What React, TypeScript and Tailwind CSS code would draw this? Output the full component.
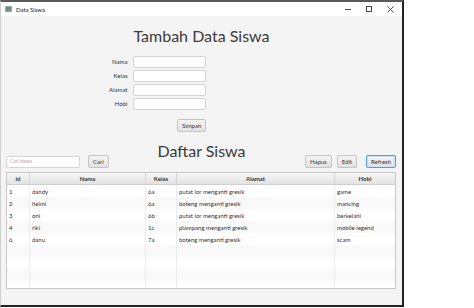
import React from 'react'

const rows = [
  { id: '1', nama: 'dandy', kelas: '6a', alamat: 'putat lor menganti gresik', hobi: 'game' },
  { id: '2', nama: 'helmi', kelas: '6a', alamat: 'boteng menganti gresik', hobi: 'mancing' },
  { id: '3', nama: 'oni', kelas: '6b', alamat: 'putat lor menganti gresik', hobi: 'berkelahi' },
  { id: '4', nama: 'riki', kelas: '1c', alamat: 'plampang menganti gresik', hobi: 'mobile legend' },
  { id: '6', nama: 'danu', kelas: '7a', alamat: 'boteng menganti gresik', hobi: 'scam' },
]

const font = { fontFamily: 'Lato, "Open Sans", sans-serif' }

function Field({ label }: { label: string }) {
  return (
    <>
      <div className="text-right text-[6px] text-[#333] leading-[12px]">{label}</div>
      <div className="h-[12px] w-[73px] bg-white border border-[#d4d4d4] rounded-[2px]" />
    </>
  )
}

function Btn({ children, focused }: { children: React.ReactNode; focused?: boolean }) {
  return (
    <div
      className={`h-[13px] px-[4px] flex items-center text-[6px] text-[#333] rounded-[2px] bg-gradient-to-b from-[#f4f4f4] to-[#e2e2e2] border ${
        focused ? 'border-[#4a9fd6] shadow-[inset_0_0_0_1px_#cde6f7]' : 'border-[#c4c4c4]'
      }`}
    >
      {children}
    </div>
  )
}

const cols = 'grid grid-cols-[23px_116px_31px_158px_1fr]'

export default function App() {
  return (
    <div className="w-[474px] h-[308px] bg-white" style={font}>
      <div className="w-[404px] h-[307px] flex flex-col border-t-2 border-r-2 border-b-2 border-l border-t-[#5a5a5a] border-r-[#222] border-b-[#222] border-l-[#cfcfcf]">
        {/* Title bar */}
        <div className="h-[14px] bg-white flex items-center pl-[4px]">
          <div className="w-[7px] h-[6px] bg-[#6d8f7a] border border-[#9ab] mr-[4px]" />
          <span className="text-[6px] text-[#222]">Data Siswa</span>
          <div className="ml-auto flex items-center gap-[15px] pr-[8px] text-[#444]">
            <div className="w-[6px] h-px bg-[#444]" />
            <div className="w-[6px] h-[6px] border border-[#444]" />
            <svg width="7" height="7" viewBox="0 0 7 7" stroke="#444" strokeWidth="0.9">
              <path d="M0.5 0.5 L6.5 6.5 M6.5 0.5 L0.5 6.5" />
            </svg>
          </div>
        </div>

        {/* Content */}
        <div className="flex-1 bg-[#f4f4f4] flex flex-col px-[5px]">
          <div className="text-center text-[16px] text-[#3a3a3a] leading-[22px] mt-[9px]">Tambah Data Siswa</div>

          <div className="grid grid-cols-[auto_auto] gap-x-[6px] gap-y-[2px] mt-[9px] ml-[103px] w-max">
            <Field label="Nama" />
            <Field label="Kelas" />
            <Field label="Alamat" />
            <Field label="Hobi" />
          </div>

          <div className="ml-[171px] mt-[9px] w-max">
            <Btn>Simpan</Btn>
          </div>

          <div className="text-center text-[16px] text-[#3a3a3a] leading-[20px] mt-[9px]">Daftar Siswa</div>

          <div className="flex items-center -mt-[6px]">
            <div className="flex items-center gap-[8px]">
              <div className="h-[12px] w-[74px] bg-white border border-[#d4d4d4] rounded-[2px] flex items-center pl-[3px] text-[5px] text-[#aaa]">
                Cari siswa
              </div>
              <Btn>Cari</Btn>
            </div>
            <div className="ml-auto flex items-center gap-[5px] pr-px">
              <Btn>Hapus</Btn>
              <div className="mr-[4px]">
                <Btn>Edit</Btn>
              </div>
              <Btn focused>Refresh</Btn>
            </div>
          </div>

          {/* Table */}
          <div className="mt-[4px] mr-px h-[117px] border border-[#c8c8c8] bg-white overflow-hidden text-[6px] text-[#333]">
            <div className={`${cols} h-[12px] bg-gradient-to-b from-[#f6f6f6] to-[#e3e3e3] border-b border-[#cfcfcf] font-bold`}>
              {['id', 'Nama', 'Kelas', 'Alamat', 'Hobi'].map((h) => (
                <div key={h} className="flex items-center justify-center border-r border-[#d6d6d6] last:border-r-0">
                  {h}
                </div>
              ))}
            </div>
            {Array.from({ length: 9 }).map((_, i) => {
              const r = rows[i]
              return (
                <div key={i} className={`${cols} h-[12px] ${i % 2 === 1 ? 'bg-[#f9f9f9]' : 'bg-white'}`}>
                  <div className="pl-[2px] flex items-center border-r border-[#ececec]">{r?.id}</div>
                  <div className="pl-[2px] flex items-center border-r border-[#ececec]">{r?.nama}</div>
                  <div className="pl-[2px] flex items-center border-r border-[#ececec]">{r?.kelas}</div>
                  <div className="pl-[2px] flex items-center border-r border-[#ececec]">{r?.alamat}</div>
                  <div className="pl-[2px] flex items-center">{r?.hobi}</div>
                </div>
              )
            })}
          </div>
        </div>
      </div>
    </div>
  )
}
